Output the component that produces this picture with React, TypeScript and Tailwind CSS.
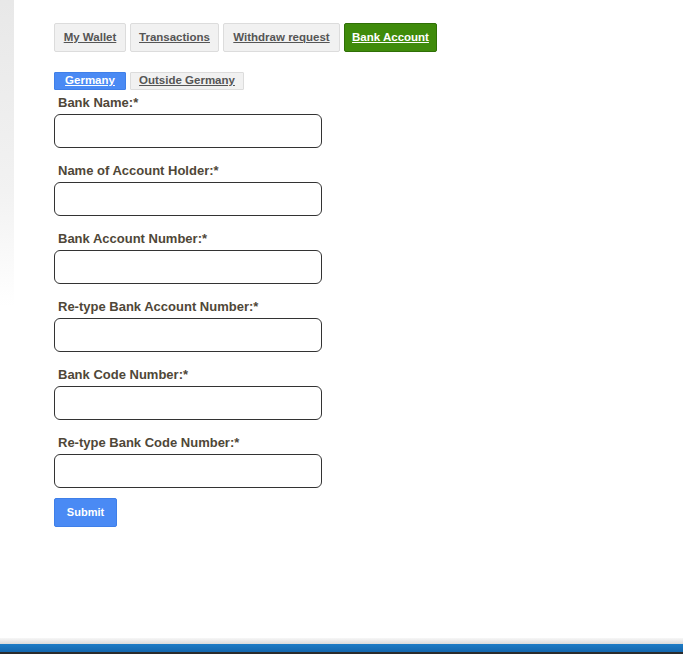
import React, { useState } from "react";

const tabs = [
  { label: "My Wallet", w: "w-[72px]" },
  { label: "Transactions", w: "w-[89px]" },
  { label: "Withdraw request", w: "w-[117px]" },
  { label: "Bank Account", w: "w-[93px]" },
];

const fields = [
  "Bank Name:*",
  "Name of Account Holder:*",
  "Bank Account Number:*",
  "Re-type Bank Account Number:*",
  "Bank Code Number:*",
  "Re-type Bank Code Number:*",
];

const App = () => {
  const [region, setRegion] = useState("Germany");
  const active = "Bank Account";

  return (
    <div className="min-h-[654px] flex flex-col bg-white font-['Liberation_Sans',Arial,sans-serif]">
      <div className="flex flex-1">
        <div className="w-[14px] bg-gradient-to-b from-[#e8e8e8] via-[#f2f2f2] via-30% to-white to-48%" />
        <div className="flex-1 pl-[40px] pt-[23px]">
          <div className="flex gap-[4px]">
            {tabs.map((t) => (
              <a
                key={t.label}
                href="#"
                className={`${t.w} h-[29px] flex items-center justify-center rounded-[2px] border text-[11.5px] font-bold underline ${
                  t.label === active
                    ? "bg-[#3f8b0b] border-[#2f7006] text-white"
                    : "bg-[#f1f1f1] border-[#dcdcdc] text-[#555]"
                }`}
              >
                {t.label}
              </a>
            ))}
          </div>

          <div className="flex gap-[4px] mt-[20px]">
            {["Germany", "Outside Germany"].map((r) => (
              <a
                key={r}
                href="#"
                onClick={(e) => {
                  e.preventDefault();
                  setRegion(r);
                }}
                className={`h-[18px] flex items-center justify-center rounded-[1px] border text-[11.5px] font-bold underline ${
                  r === "Germany" ? "w-[72px]" : "w-[114px]"
                } ${
                  region === r
                    ? "bg-[#4a8af4] border-[#3f7fe8] text-white"
                    : "bg-[#f1f1f1] border-[#dcdcdc] text-[#555]"
                }`}
              >
                {r}
              </a>
            ))}
          </div>

          <form className="flex flex-col">
            {fields.map((f, i) => (
              <div key={f} className={i === 0 ? "mt-[3px]" : "mt-[13px]"}>
                <label className="block pl-[4px] text-[13px] leading-[20px] font-bold text-[#4f4738]">
                  {f}
                </label>
                <input
                  type="text"
                  className="mt-[1px] block w-[268px] h-[34px] rounded-[6px] border border-[#333] bg-white px-2 text-[13px] focus:outline-none"
                />
              </div>
            ))}
            <div className="mt-[10px]">
              <button
                type="button"
                className="w-[63px] h-[29px] rounded-[2px] border border-[#3f7fe8] bg-[#4a8af4] text-white text-[11px] font-bold"
              >
                Submit
              </button>
            </div>
          </form>
        </div>
      </div>

      <div className="h-[6px] bg-gradient-to-b from-[#f7f7f7] to-[#dadada]" />
      <div className="h-[8px] bg-gradient-to-b from-[#1d7cc6] to-[#1466ad]" />
      <div className="h-[2px] bg-[#2b2b2b]" />
    </div>
  );
};

export default App;
